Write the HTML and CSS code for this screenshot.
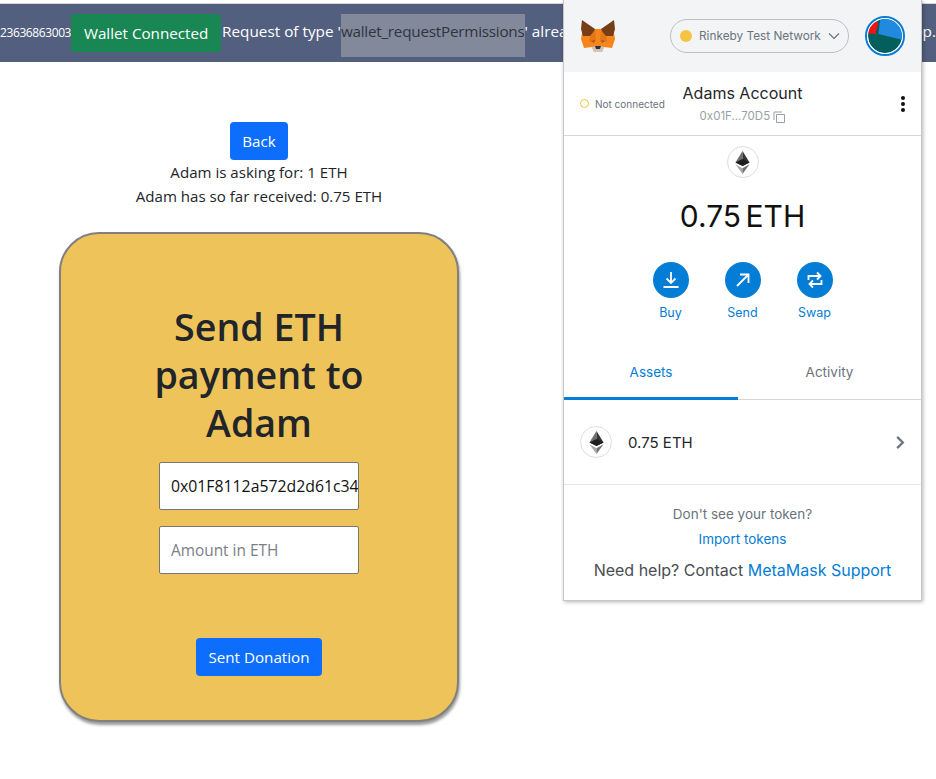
FILE: index.html
```html
<!DOCTYPE html>
<html lang="en">
<head>
<meta charset="utf-8">
<title>Send ETH</title>
<link rel="stylesheet" href="styles.css">
</head>
<body>
<header class="banner">
  <div class="tx-id">23636863003</div>
  <div class="badge">Wallet Connected</div>
  <div class="alert">Request of type '<span class="alert-mark">wallet_requestPermissions</span>' already pending</div>
  <div class="alert-end">op.</div>
</header>

<main class="page">
  <button class="btn back">Back</button>
  <p class="line">Adam is asking for: 1 ETH</p>
  <p class="line">Adam has so far received: 0.75 ETH</p>
  <section class="card">
    <h1 class="card-title">Send ETH payment to Adam</h1>
    <input class="field" type="text" value="0x01F8112a572d2d61c34">
    <input class="field" type="text" placeholder="Amount in ETH">
    <button class="btn donate">Sent Donation</button>
  </section>
</main>

<aside class="wallet">
  <div class="w-head">
    <svg class="fox" viewBox="0 0 36 34" width="36" height="34">
      <polygon fill="#f6851b" points="2,14 14,10 22,10 34,14 35,20 32,29 24,28 22,33 14,33 12,28 4,29 1,20"/>
      <polygon fill="#763d16" points="2,1 15,10 12,17 3,17 1,10"/>
      <polygon fill="#763d16" points="34,1 21,10 24,17 33,17 35,10"/>
      <polygon fill="#e2761b" points="10,17 15,11 16,22 9,23"/>
      <polygon fill="#e2761b" points="26,17 21,11 20,22 27,23"/>
      <polygon fill="#d7c1b3" points="12,28 14,33 22,33 24,28 21,27 15,27"/>
      <polygon fill="#233447" points="15,27 21,27 20,30 16,30"/>
      <polygon fill="#a8561a" points="11,22 15,21 14,24"/>
      <polygon fill="#a8561a" points="25,22 21,21 22,24"/>
    </svg>
    <div class="net">
      <span class="net-dot"></span>
      <span class="net-name">Rinkeby Test Network</span>
      <svg class="net-arrow" viewBox="0 0 12 8" width="12" height="8"><path d="M1 1.5 6 6.5 11 1.5" fill="none" stroke="#6a737d" stroke-width="1.2"/></svg>
    </div>
    <div class="avatar">
      <svg viewBox="0 0 36 36" width="36" height="36">
        <circle cx="18" cy="18" r="18" fill="#035f5b"/>
        <polygon fill="#2189de" points="13,0 11,16 36,22 36,0"/>
        <polygon fill="#f01414" points="0,15 8,16 11,4 0,0"/>
      </svg>
    </div>
  </div>

  <div class="w-account">
    <div class="status"><span class="status-dot"></span>Not connected</div>
    <div class="acct">
      <div class="acct-name">Adams Account</div>
      <div class="acct-addr">0x01F...70D5
        <svg class="copy" viewBox="0 0 12 12" width="12" height="12"><path d="M3.500 3.500h8v8h-8z M1 9V1h8" fill="none" stroke="#9a9fa5" stroke-width="1"/></svg>
      </div>
    </div>
    <div class="kebab"><i></i><i></i><i></i></div>
  </div>

  <div class="w-balance">
    <span class="eth-coin">
      <svg viewBox="0 0 16 26" width="15" height="23">
        <polygon fill="#6e6e6e" points="8,0 0,13 8,17"/><polygon fill="#343434" points="8,0 16,13 8,17"/>
        <polygon fill="#a8a8a8" points="0,15 8,26 8,19.500"/><polygon fill="#707070" points="16,15 8,26 8,19.500"/>
        <polygon fill="#1e1e1e" points="8,9 0,13 8,17 16,13"/>
      </svg>
    </span>
    <div class="amount">0.75 ETH</div>
    <div class="actions">
      <div class="action">
        <span class="action-btn"><svg viewBox="0 0 18 18" width="18" height="18"><path d="M9 1v11M4.500 7.500 9 12l4.500-4.500M1.500 16h15" fill="none" stroke="#fff" stroke-width="1.800"/></svg></span>
        <span class="action-label">Buy</span>
      </div>
      <div class="action">
        <span class="action-btn"><svg viewBox="0 0 18 18" width="18" height="18"><path d="M3 15 14.500 3.500M6 3.500h8.500V12" fill="none" stroke="#fff" stroke-width="1.800"/></svg></span>
        <span class="action-label">Send</span>
      </div>
      <div class="action">
        <span class="action-btn"><svg viewBox="0 0 18 18" width="18" height="18"><path d="M2.500 9V5H14M11 1.500 14.500 5 11 8.500M15.500 9v4H4M7 9.500 3.500 13 7 16.500" fill="none" stroke="#fff" stroke-width="1.800"/></svg></span>
        <span class="action-label">Swap</span>
      </div>
    </div>
  </div>

  <div class="tabs">
    <div class="tab tab-on">Assets</div>
    <div class="tab">Activity</div>
  </div>

  <div class="asset">
    <span class="eth-coin">
      <svg viewBox="0 0 16 26" width="15" height="23">
        <polygon fill="#6e6e6e" points="8,0 0,13 8,17"/><polygon fill="#343434" points="8,0 16,13 8,17"/>
        <polygon fill="#a8a8a8" points="0,15 8,26 8,19.500"/><polygon fill="#707070" points="16,15 8,26 8,19.500"/>
        <polygon fill="#1e1e1e" points="8,9 0,13 8,17 16,13"/>
      </svg>
    </span>
    <span class="asset-name">0.75 ETH</span>
    <svg class="asset-arrow" viewBox="0 0 10 16" width="10" height="15"><path d="M2 2l6 6-6 6" fill="none" stroke="#6a737d" stroke-width="2.400"/></svg>
  </div>

  <div class="w-foot">
    <div class="foot-q">Don't see your token?</div>
    <a class="foot-link">Import tokens</a>
    <div class="foot-help">Need help? Contact <a class="help-link">MetaMask Support</a></div>
  </div>
</aside>
</body>
</html>
```

FILE: styles.css
```css
* { box-sizing: border-box; }
html, body { margin: 0; padding: 0; }
body {
  position: relative;
  height: 779px;
  overflow: hidden;
  background: #fff;
  color: #212529;
  font-family: "Open Sans", "Noto Sans", sans-serif;
  padding-top: 4px;
}

.banner {
  display: flex;
  align-items: flex-start;
  height: 58px;
  padding-top: 10px;
  background: #535f7e;
  color: #fff;
  overflow: hidden;
  white-space: nowrap;
  box-shadow: 0 -1px 0 #d8d8d8;
}
.tx-id {
  flex: 0 0 71px;
  font-size: 12px;
  line-height: 38px;
  letter-spacing: -0.4px;
}
.badge {
  flex: 0 0 150px;
  height: 38px;
  background: #198754;
  border-radius: 3px;
  font-size: 15.200px;
  line-height: 38px;
  text-align: center;
}
.alert {
  margin-left: 1px;
  font-size: 15.300px;
  line-height: 34px;
}
.alert-mark {
  display: inline-block;
  height: 43px;
  background: #82899a;
  color: #30343f;
  vertical-align: top;
  letter-spacing: -0.26px;
}
.alert-end {
  margin-left: auto;
  font-size: 15.300px;
  line-height: 34px;
}

.page {
  display: flex;
  flex-direction: column;
  align-items: center;
  width: 518px;
  padding-top: 60px;
}
.btn {
  height: 38px;
  border: 0;
  border-radius: 4px;
  background: #0d6efd;
  color: #fff;
  font: inherit;
  font-size: 15.200px;
  padding: 0 12.600px;
}
.line {
  margin: 0;
  font-size: 15.100px;
  line-height: 24px;
}
.card {
  display: flex;
  flex-direction: column;
  align-items: center;
  width: 400px;
  height: 490px;
  margin-top: 24px;
  padding-top: 69px;
  background: #eec359;
  border: 2px solid #808080;
  border-radius: 40px;
  box-shadow: 1px 3px 3px rgba(0, 0, 0, .4);
}
.card-title {
  margin: 0 0 15px;
  width: 260px;
  text-align: center;
  font-size: 37.600px;
  font-weight: 600;
  line-height: 48px;
}
.field {
  width: 200px;
  height: 48px;
  margin-bottom: 16px;
  padding: 0 0 0 11px;
  border: 1px solid #777;
  border-radius: 2px;
  background: #fff;
  color: #111;
  font: inherit;
  font-size: 15.800px;
}
.field::placeholder { color: #7a7f85; font-size: 15.400px; }
.donate { margin-top: 48px; }

.wallet {
  position: absolute;
  top: 0;
  left: 563px;
  width: 359px;
  height: 601px;
  background: #fff;
  border: solid #c4c6c8;
  border-width: 0 1px 1px;
  box-shadow: 1px 1px 4px rgba(0, 0, 0, .3);
  font-family: "Inter", "Lato", sans-serif;
}
.w-head {
  display: flex;
  align-items: center;
  height: 72px;
  padding: 0 16px;
  background: #f2f4f6;
}
.fox { flex: none; }
.net {
  display: flex;
  align-items: center;
  gap: 7px;
  width: 179px;
  height: 34px;
  margin-left: 54px;
  padding: 0 9px;
  border: 1px solid #bbc0c5;
  border-radius: 17px;
  color: #6a737d;
  font-size: 11.800px;
  white-space: nowrap;
}
.net-dot { flex: none; width: 12px; height: 12px; border-radius: 50%; background: #f6c343; }
.net-name { flex: 1; }
.net-arrow { flex: none; }
.avatar {
  flex: none;
  width: 40px;
  height: 40px;
  margin-left: 16px;
  border: 2px solid #037dd6;
  border-radius: 50%;
  overflow: hidden;
  background: #fff;
}
.avatar svg { display: block; border: 1px solid #fff; border-radius: 50%; }

.w-account {
  display: grid;
  grid-template-columns: 1fr auto 1fr;
  align-items: center;
  height: 64px;
  padding: 0 16px;
  border-bottom: 1px solid #d6d9dc;
}
.status {
  display: flex;
  align-items: center;
  gap: 6px;
  color: #6a737d;
  font-size: 10px;
  white-space: nowrap;
}
.status-dot { width: 9px; height: 9px; border: 1px solid #f6c343; border-radius: 50%; }
.acct { text-align: center; }
.acct-name { color: #24272a; font-size: 16px; line-height: 24px; }
.acct-addr { color: #9a9fa5; font-size: 11.500px; line-height: 22px; white-space: nowrap; }
.copy { vertical-align: -3px; }
.kebab { justify-self: end; display: flex; flex-direction: column; gap: 2px; }
.kebab i { width: 4px; height: 4px; border-radius: 50%; background: #111; }

.w-balance {
  display: flex;
  flex-direction: column;
  align-items: center;
  height: 217px;
  padding-top: 10px;
}
.eth-coin {
  display: flex;
  align-items: center;
  justify-content: center;
  flex: none;
  width: 32px;
  height: 32px;
  border: 1px solid #dedede;
  border-radius: 50%;
  background: #fff;
}
.amount { margin-top: 18px; color: #111; font-size: 30px; line-height: 40px; word-spacing: -4px; }
.actions { display: flex; gap: 36px; margin-top: 26px; }
.action { display: flex; flex-direction: column; align-items: center; width: 36px; }
.action-btn {
  display: flex;
  align-items: center;
  justify-content: center;
  width: 36px;
  height: 36px;
  border-radius: 50%;
  background: #037dd6;
}
.action-label { margin-top: 5px; color: #037dd6; font-size: 12.500px; line-height: 20px; }

.tabs {
  display: grid;
  grid-template-columns: 174px 1fr;
  height: 47px;
  border-bottom: 1px solid #d6d9dc;
}
.tab {
  color: #6a737d;
  font-size: 13.500px;
  line-height: 38px;
  text-align: center;
}
.tab-on { color: #037dd6; border-bottom: 3px solid #037dd6; height: 47px; }

.asset {
  display: flex;
  align-items: center;
  height: 85px;
  padding: 0 16px;
  border-bottom: 1px solid #e4e6e8;
}
.asset-name { flex: 1; margin-left: 16px; color: #24272a; font-size: 15px; }
.asset-arrow { flex: none; }

.w-foot { padding-top: 18px; text-align: center; }
.foot-q { color: #6a737d; font-size: 13.500px; line-height: 22px; }
.foot-link { display: block; margin-top: 3px; color: #037dd6; font-size: 13.500px; line-height: 22px; }
.foot-help { margin-top: 9px; color: #4a4d52; font-size: 16px; line-height: 22px; }
.help-link { color: #037dd6; }
```
